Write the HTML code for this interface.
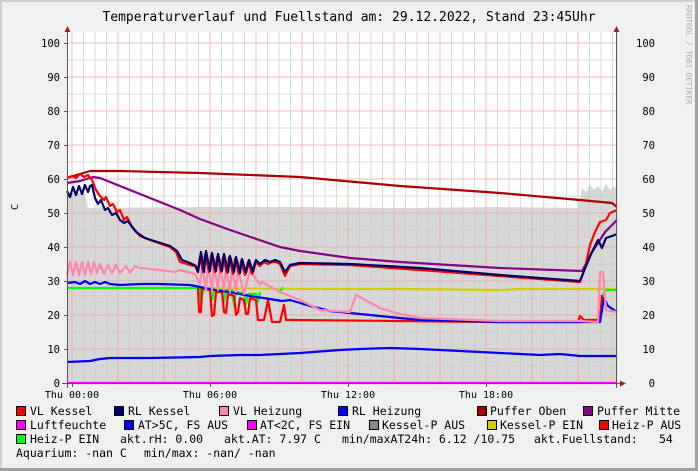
<!DOCTYPE html><html><head><style>
html,body{margin:0;padding:0;background:#f0f0f0}
svg{display:block}
text{font-family:"DejaVu Sans Mono","Liberation Mono",monospace;fill:#000}
</style></head><body>
<svg width="698" height="471" viewBox="0 0 698 471" xmlns="http://www.w3.org/2000/svg">
<rect x="0" y="0" width="698" height="471" fill="#f0f0f0"/>
<rect x="0" y="0" width="698" height="2" fill="#d0d0d0"/>
<rect x="0" y="0" width="2" height="471" fill="#d0d0d0"/>
<rect x="695" y="0" width="3" height="471" fill="#a0a0a0"/>
<rect x="0" y="468" width="698" height="3" fill="#a0a0a0"/>
<rect x="67" y="32" width="550" height="351" fill="#ffffff"/>
<polygon fill="#d7d7d7" points="67,383 67,193 85,193 88,208 200,207 300,207 400,208 500,207 578,208 582,188 586,192 590,185 594,190 598,186 602,192 606,184 610,190 614,186 617,190 617,383"/>
<g stroke="#c8c8c8" stroke-width="0.8" opacity="0.8">
<path d="M83.5,32V383M95,32V383M106.5,32V383M129.5,32V383M141,32V383M152.5,32V383M175.5,32V383M187,32V383M198.5,32V383M221.5,32V383M233,32V383M244.5,32V383M267.5,32V383M279,32V383M290.5,32V383M313.5,32V383M325,32V383M336.5,32V383M359.5,32V383M371,32V383M382.5,32V383M405.5,32V383M417,32V383M428.5,32V383M451.5,32V383M463,32V383M474.5,32V383M497.5,32V383M509,32V383M520.5,32V383M543.5,32V383M555,32V383M566.5,32V383M589.5,32V383M601,32V383M612.5,32V383"/>
<path d="M67,366H617M67,332H617M67,298H617M67,264H617M67,230H617M67,196H617M67,162H617M67,128H617M67,94H617M67,60H617"/>
</g>
<g stroke="#f0a0a0" stroke-width="0.8" opacity="0.9">
<path d="M72,32V383M118,32V383M164,32V383M210,32V383M256,32V383M302,32V383M348,32V383M394,32V383M440,32V383M486,32V383M532,32V383M578,32V383"/>
<path d="M67,349H617M67,315H617M67,281H617M67,247H617M67,213H617M67,179H617M67,145H617M67,111H617M67,77H617M67,43H617"/>
</g>
<g fill="none" stroke-width="2.2" stroke-linejoin="round">
<polyline stroke="#0000ff" points="67,362 90,361 100,359 110,358 150,358 200,357 210,356 240,355 260,355 300,353 340,350 360,349 390,348 420,349 460,351 500,353 540,355 560,354 580,356 600,356 617,356"/>
<polyline stroke="#d0d000" points="195,288 300,289 400,289 500,290 520,289 617,289"/>
<polyline stroke="#00ff00" points="67,288 200,288 201,303 203,290 210,290 212,300 214,290 222,290 224,302 226,290 232,290 234,305 236,292 244,293 246,304 248,294 256,294 258,302 260,292"/>
<polyline stroke="#00ff00" points="280,292 283,287"/>
<polyline stroke="#00ff00" points="602,298 605,290 617,290"/>
<polyline stroke="#ff0000" points="198,288 199,312 201,312 202,288 210,290 212,316 214,315 216,292 222,292 224,312 226,313 228,294 234,296 236,315 238,312 240,298 244,300 246,314 248,314 250,298 256,300 258,320 264,320 268,300 272,322 280,322 284,305 286,320 290,320 400,321 500,322 578,322 580,316 584,320 600,320 602,295"/>
<polyline stroke="#0000ff" points="67,283 75,282 80,284 85,281 90,284 95,282 100,284 105,282 110,284 120,285 140,284 160,284 190,285 200,287 215,290 230,292 250,296 270,299 282,301 290,300 310,306 330,311 350,313 380,316 420,320 500,322 580,322 600,322 604,298 608,306 617,312"/>
<polyline stroke="#ff88aa" points="67,275 70,262 73,275 76,262 79,275 82,262 85,275 88,262 91,274 94,262 97,273 100,264 104,274 108,265 112,273 116,265 120,273 126,266 130,273 135,266 140,268 160,270 175,272 180,270 195,274 200,284 202,266 206,290 208,264 212,290 214,264 218,290 220,264 224,290 226,266 230,292 232,266 236,292 238,268 244,294 250,270 260,285 262,282 280,292 300,300 320,310 350,312 356,295 380,308 400,314 420,318 500,321 580,321 598,322 600,272 603,272 606,310 617,312"/>
<polyline stroke="#aa0000" points="67,178 80,174 90,171 120,171 200,173 300,177 400,186 500,193 580,200 612,203 617,207"/>
<polyline stroke="#880088" points="67,183 80,181 93,177 100,178 120,186 150,198 180,210 200,219 230,230 280,247 300,251 350,258 400,262 500,268 582,271 588,260 592,252 598,243 605,232 612,225 617,220"/>
<polyline stroke="#ff0000" points="67,178 72,176 76,178 80,174 84,177 88,175 92,180 96,190 100,196 104,200 106,197 110,206 113,204 117,212 120,210 124,220 127,217 131,225 135,230 140,236 150,240 170,247 176,252 180,262 190,265 195,266 198,272 200,256 203,272 205,254 209,272 211,256 215,272 217,257 221,272 223,257 227,273 229,257 233,274 235,259 239,274 241,261 245,275 248,262 252,274 255,262 260,266 264,262 268,264 272,262 276,262 280,264 285,276 290,266 300,264 350,265 420,270 500,276 580,282 585,268 590,245 595,232 600,222 606,220 610,213 617,210"/>
<polyline stroke="#000066" points="67,191 70,197 73,187 76,195 79,186 82,194 85,185 88,192 90,186 92,185 95,198 98,204 101,200 105,210 108,208 112,215 116,213 120,220 124,223 128,221 132,227 136,232 145,238 170,246 177,251 182,260 190,263 196,266 198,272 201,252 204,272 206,251 210,271 212,253 216,271 218,254 222,271 224,254 228,272 230,256 234,272 236,257 240,273 242,259 246,273 249,260 253,272 256,260 260,264 265,260 270,262 275,260 280,262 285,272 290,265 300,263 350,264 420,268 500,275 580,281 586,266 592,252 598,240 602,248 606,238 612,236 617,234"/>
<line x1="67" y1="383" x2="617" y2="383" stroke="#ff00ff" stroke-width="2.2"/>
</g>
<line x1="67.5" y1="32" x2="67.5" y2="388" stroke="#555" stroke-width="1"/>
<line x1="616.5" y1="32" x2="616.5" y2="388" stroke="#555" stroke-width="1"/>
<line x1="62" y1="383.5" x2="620" y2="383.5" stroke="#555" stroke-width="1"/>
<polygon points="64.5,32 70.5,32 67.5,26" fill="#a02020"/>
<polygon points="613.5,32 619.5,32 616.5,26" fill="#a02020"/>
<polygon points="620,380.5 620,386.5 626,383.5" fill="#a02020"/>
<g stroke="#555" stroke-width="1">
<path d="M64,383.5H67M64,349.5H67M64,315.5H67M64,281.5H67M64,247.5H67M64,213.5H67M64,179.5H67M64,145.5H67M64,111.5H67M64,77.5H67M64,43.5H67"/>
<path d="M72.5,383V387M210.5,383V387M348.5,383V387M486.5,383V387"/>
</g>
<text x="349" y="21" font-size="13" text-anchor="middle">Temperaturverlauf und Fuellstand am: 29.12.2022, Stand 23:45Uhr</text>
<text transform="translate(18,207) rotate(-90)" font-size="10" text-anchor="middle">C</text>
<text transform="translate(686,5) rotate(90)" font-size="7.5" style="fill:#b0b0b0">RRDTOOL / TOBI OETIKER</text>
<g font-size="10.5" text-anchor="end">
<text x="60" y="47">100</text><text x="60" y="81">90</text><text x="60" y="115">80</text><text x="60" y="149">70</text><text x="60" y="183">60</text><text x="60" y="217">50</text><text x="60" y="251">40</text><text x="60" y="285">30</text><text x="60" y="319">20</text><text x="60" y="353">10</text><text x="60" y="387">0</text>
</g>
<g font-size="10.5" text-anchor="end">
<text x="655" y="47">100</text><text x="655" y="81">90</text><text x="655" y="115">80</text><text x="655" y="149">70</text><text x="655" y="183">60</text><text x="655" y="217">50</text><text x="655" y="251">40</text><text x="655" y="285">30</text><text x="655" y="319">20</text><text x="655" y="353">10</text><text x="655" y="387">0</text>
</g>
<g font-size="10" text-anchor="middle">
<text x="72" y="398">Thu 00:00</text><text x="210" y="398">Thu 06:00</text><text x="348" y="398">Thu 12:00</text><text x="486" y="398">Thu 18:00</text>
</g>
<g stroke="#000" stroke-width="1">
<rect x="16.5" y="406.5" width="9" height="9" fill="#ff0000"/>
<rect x="114.5" y="406.5" width="9" height="9" fill="#000066"/>
<rect x="219.5" y="406.5" width="9" height="9" fill="#ff88aa"/>
<rect x="338.5" y="406.5" width="9" height="9" fill="#0000ff"/>
<rect x="477.5" y="406.5" width="9" height="9" fill="#aa0000"/>
<rect x="583.5" y="406.5" width="9" height="9" fill="#880088"/>
<rect x="16.5" y="420.5" width="9" height="9" fill="#ff00ff"/>
<rect x="124.5" y="420.5" width="9" height="9" fill="#0000ff"/>
<rect x="247.5" y="420.5" width="9" height="9" fill="#ff00ff"/>
<rect x="369.5" y="420.5" width="9" height="9" fill="#888888"/>
<rect x="487.5" y="420.5" width="9" height="9" fill="#d0d000"/>
<rect x="599.5" y="420.5" width="9" height="9" fill="#ff0000"/>
<rect x="16.5" y="434.5" width="9" height="9" fill="#00ff00"/>
</g>
<g font-size="11.5" style="white-space:pre">
<text x="30" y="415">VL Kessel</text><text x="128" y="415">RL Kessel</text><text x="233" y="415">VL Heizung</text><text x="352" y="415">RL Heizung</text><text x="490" y="415">Puffer Oben</text><text x="597" y="415">Puffer Mitte</text>
<text x="30" y="429">Luftfeuchte</text><text x="138" y="429">AT&gt;5C, FS AUS</text><text x="260" y="429">AT&lt;2C, FS EIN</text><text x="382" y="429">Kessel-P AUS</text><text x="500" y="429">Kessel-P EIN</text><text x="612" y="429">Heiz-P AUS</text>
<text x="30" y="443">Heiz-P EIN</text><text x="120" y="443">akt.rH: 0.00</text><text x="224" y="443">akt.AT: 7.97 C</text><text x="342" y="443">min/maxAT24h: 6.12 /10.75</text><text x="534" y="443">akt.Fuellstand:</text><text x="659" y="443">54</text>
<text x="16" y="457">Aquarium: -nan C</text><text x="144" y="457">min/max: -nan/ -nan</text>
</g>
</svg>
</body></html>
